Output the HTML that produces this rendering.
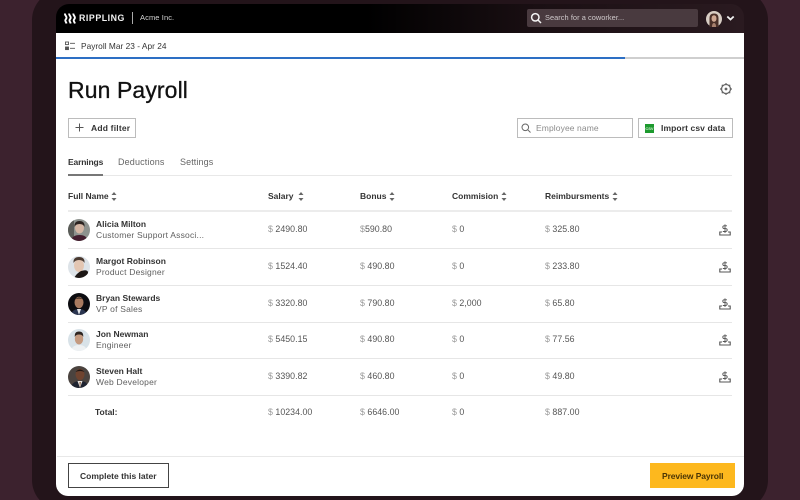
<!DOCTYPE html>
<html><head><meta charset="utf-8">
<style>
*{box-sizing:border-box;margin:0;padding:0}
html,body{width:800px;height:500px;overflow:hidden;background:#3c222e;font-family:"Liberation Sans",sans-serif;color:#2b2b2b}
#wrap{position:relative;width:800px;height:500px;overflow:hidden;background:#3c222e}
.a{position:absolute;white-space:nowrap;line-height:12px}
#frame{position:absolute;left:32px;top:-10px;width:736px;height:520px;background:#23141a;border-radius:30px}
#head{position:absolute;left:56px;top:4px;width:688px;height:40px;border-radius:13px 13px 0 0;background:linear-gradient(90deg,#000 0,#000 45%,#1a0f13 70%,#2a1a20 100%)}
#screen{position:absolute;left:56px;top:33px;width:688px;height:463px;background:#fff;border-radius:0 0 12px 12px}
.line{position:absolute;left:68px;width:664px;height:1px;background:#e6e6e6}
.h{font-size:8.5px;font-weight:bold;color:#333}
.n{font-size:8.5px;font-weight:bold;color:#333}
.s{font-size:8.5px;letter-spacing:.2px;color:#5f5f5f}
.v{font-size:8.8px;letter-spacing:.03px;color:#555}
.v i{font-style:normal;color:#9a9a9a}
.btn{position:absolute;background:#fff;border:1px solid #bcbcbc}
svg{position:absolute;display:block}
</style></head><body><div id="wrap">
<div id="frame"></div>
<div id="head"></div>
<div id="screen"></div>

<svg style="left:64px;top:13px" width="13" height="11" viewBox="0 0 13 11" fill="none" stroke="#fff" stroke-width="1.900"><path d="M.9 .5c0 2.200 1.600 2.400 1.600 4.200 0 1.300-1.200 1.500-1.200 2.800 0 1 .9 1.600 1.200 3M5.100 .5c0 2.200 1.600 2.400 1.600 4.200 0 1.300-1.200 1.500-1.200 2.800 0 1 .9 1.600 1.200 3M9.300 .5c0 2.200 1.600 2.400 1.600 4.200 0 1.300-1.200 1.500-1.200 2.800 0 1 .9 1.600 1.200 3"/></svg>
<div class="a" style="left:79px;top:12px;font-size:8.800px;font-weight:bold;color:#f2f2f2;letter-spacing:.55px">RIPPLING</div>
<div class="a" style="left:132px;top:12px;width:1px;height:12px;background:#aaa"></div>
<div class="a" style="left:140px;top:12px;font-size:7.500px;color:#d5d5d5;letter-spacing:.1px">Acme Inc.</div>

<div class="a" style="left:527px;top:9px;width:171px;height:18px;border-radius:2px;background:#493a3f"></div>
<svg style="left:530px;top:12px" width="12" height="12" viewBox="0 0 12 12" fill="none" stroke="#f4f4f4" stroke-width="1.500"><circle cx="5.300" cy="5.300" r="3.700"/><path d="M8 8l3 3"/></svg>
<div class="a" style="left:545px;top:12px;font-size:7.400px;color:#cfc9cb;letter-spacing:.05px">Search for a coworker...</div>
<svg style="left:706px;top:11px" width="16" height="16" viewBox="0 0 16 16"><circle cx="8" cy="8" r="8" fill="#d8cdc4"/><path d="M3.500 16V7q0-4.500 4.500-4.500T12.500 7v9z" fill="#4a2f28"/><ellipse cx="8" cy="7.500" rx="2.500" ry="3.300" fill="#cfa893"/><path d="M6 16q0-4 2-4t2 4z" fill="#a8806e"/></svg>
<svg style="left:726px;top:15px" width="9" height="7" viewBox="0 0 9 7" fill="none" stroke="#f2f2f2" stroke-width="1.800"><path d="M1.300 1.500l3.200 3 3.200-3"/></svg>

<svg style="left:65px;top:41px" width="10" height="10" viewBox="0 0 10 10" fill="none" stroke="#555" stroke-width=".9"><rect x=".5" y="1" width="3" height="2.600"/><rect x=".5" y="6" width="3" height="2.600" fill="#555"/><path d="M5 2.300h5M5 7.300h5"/></svg>
<div class="a" style="left:81px;top:40px;font-size:8.300px;color:#333;letter-spacing:.03px">Payroll Mar 23 - Apr 24</div>
<div class="a" style="left:56px;top:57px;width:688px;height:2px;background:#cfcfcf"></div>
<div class="a" style="left:56px;top:57px;width:569px;height:2px;background:#2d6fc4"></div>

<div class="a" style="left:68px;top:76px;font-size:23px;line-height:29px;color:#111;letter-spacing:.1px;-webkit-text-stroke:.3px #111">Run Payroll</div>
<svg style="left:719px;top:82px" width="14" height="14" viewBox="0 0 14 14" fill="none" stroke="#666"><circle cx="7" cy="7" r="4.500" stroke-width="1.300"/><circle cx="7" cy="7" r="1.400" fill="#666" stroke="none"/><path d="M7 1v1.500M7 11.500V13M1 7h1.500M11.500 7H13M2.800 2.800l1 1M10.200 10.200l1 1M2.800 11.200l1-1M10.200 3.800l1-1" stroke-width="1.200"/></svg>

<div class="btn" style="left:68px;top:118px;width:68px;height:20px"></div>
<svg style="left:75px;top:123px" width="9" height="9" viewBox="0 0 9 9" stroke="#555" stroke-width="1"><path d="M4.500 .5v8M.5 4.500h8"/></svg>
<div class="a" style="left:91px;top:122px;font-size:8.500px;font-weight:bold;letter-spacing:.2px;color:#333">Add filter</div>

<div class="btn" style="left:517px;top:118px;width:116px;height:20px"></div>
<svg style="left:521px;top:123px" width="10" height="10" viewBox="0 0 10 10" fill="none" stroke="#666" stroke-width="1"><circle cx="4.300" cy="4.300" r="3.300"/><path d="M6.800 6.800l2.700 2.700"/></svg>
<div class="a" style="left:536px;top:122px;font-size:8.500px;color:#8c8c8c;letter-spacing:.1px">Employee name</div>
<div class="btn" style="left:638px;top:118px;width:95px;height:20px"></div>
<div class="a" style="left:645px;top:124px;width:9px;height:9px;background:#1d9a2e;color:#d8f0d8;font-size:4px;font-weight:bold;line-height:9px;text-align:center">CSV</div>
<div class="a" style="left:661px;top:122px;font-size:8.500px;font-weight:bold;letter-spacing:.1px;color:#333">Import csv data</div>

<div class="a" style="left:68px;top:156px;font-size:8.500px;font-weight:bold;letter-spacing:-.15px;color:#333">Earnings</div>
<div class="a" style="left:118px;top:156px;font-size:9px;letter-spacing:.15px;color:#666">Deductions</div>
<div class="a" style="left:180px;top:156px;font-size:9px;letter-spacing:.1px;color:#666">Settings</div>
<div class="line" style="top:175px;background:#e8e8e8"></div>
<div class="a" style="left:68px;top:174px;width:35px;height:2px;background:#777"></div>

<div class="a h" style="left:68px;top:190px">Full Name</div>
<div class="a h" style="left:268px;top:190px">Salary</div>
<div class="a h" style="left:360px;top:190px">Bonus</div>
<div class="a h" style="left:452px;top:190px">Commision</div>
<div class="a h" style="left:545px;top:190px">Reimbursments</div>
<svg style="left:111px;top:192px" width="6" height="9" viewBox="0 0 6 9" fill="#666"><path d="M3 0l2.500 3h-5zM3 9L.5 6h5z"/></svg>
<svg style="left:298px;top:192px" width="6" height="9" viewBox="0 0 6 9" fill="#666"><path d="M3 0l2.500 3h-5zM3 9L.5 6h5z"/></svg>
<svg style="left:389px;top:192px" width="6" height="9" viewBox="0 0 6 9" fill="#666"><path d="M3 0l2.500 3h-5zM3 9L.5 6h5z"/></svg>
<svg style="left:501px;top:192px" width="6" height="9" viewBox="0 0 6 9" fill="#666"><path d="M3 0l2.500 3h-5zM3 9L.5 6h5z"/></svg>
<svg style="left:612px;top:192px" width="6" height="9" viewBox="0 0 6 9" fill="#666"><path d="M3 0l2.500 3h-5zM3 9L.5 6h5z"/></svg>

<div class="line" style="top:210px;height:2px;background:#ececec"></div>
<div class="line" style="top:248px"></div>
<div class="line" style="top:285px"></div>
<div class="line" style="top:322px"></div>
<div class="line" style="top:358px"></div>
<div class="line" style="top:395px"></div>

<svg style="left:68px;top:219px" width="22" height="22" viewBox="0 0 22 22"><clipPath id="c1"><circle cx="11" cy="11" r="11"/></clipPath><g clip-path="url(#c1)"><rect width="22" height="22" fill="#8d928e"/><rect width="6" height="22" fill="#5a5c58"/><ellipse cx="11.500" cy="9" rx="4.500" ry="5.500" fill="#d3b5a3"/><path d="M6.500 8q-.5-6 5-6t5 6q-1-3-5-3t-5 3z" fill="#2b2320"/><path d="M3 22q1-6 8.500-6t8 6z" fill="#431d2e"/></g></svg>
<svg style="left:68px;top:256px" width="22" height="22" viewBox="0 0 22 22"><clipPath id="c2"><circle cx="11" cy="11" r="11"/></clipPath><g clip-path="url(#c2)"><rect width="22" height="22" fill="#dde3e8"/><ellipse cx="11" cy="9.500" rx="5" ry="6.500" fill="#e3c6b2"/><path d="M5.500 7q-.5-6 5.500-6t5.500 6q-1.500-3-5.500-3T5.500 7z" fill="#4a3a30"/><path d="M13 15q6-2 7 1 0 6-7 6H6q3-5 7-7z" fill="#1c1715"/></g></svg>
<svg style="left:68px;top:293px" width="22" height="22" viewBox="0 0 22 22"><clipPath id="c3"><circle cx="11" cy="11" r="11"/></clipPath><g clip-path="url(#c3)"><rect width="22" height="22" fill="#0c0c10"/><ellipse cx="11" cy="9.500" rx="4.500" ry="5.700" fill="#a87a5f"/><path d="M6.500 7q4.500-5 9 0l-1-1q-3.500-1-7 0z" fill="#1c1512"/><path d="M3 22q1-6 8-6t8 6z" fill="#2a3550"/><path d="M9 16l2 6 2-6z" fill="#e5e7ea"/></g></svg>
<svg style="left:68px;top:329px" width="22" height="22" viewBox="0 0 22 22"><clipPath id="c4"><circle cx="11" cy="11" r="11"/></clipPath><g clip-path="url(#c4)"><rect width="22" height="22" fill="#d8e2e8"/><ellipse cx="11" cy="10" rx="4.200" ry="5.500" fill="#c49a80"/><path d="M6.800 8q-.5-5.500 4.200-5.500T15.200 8q-1-2.500-4.200-2.500T6.800 8z" fill="#2d2420"/><path d="M3 22q1-6 8-6t8 6z" fill="#eef1f3"/></g></svg>
<svg style="left:68px;top:366px" width="22" height="22" viewBox="0 0 22 22"><clipPath id="c5"><circle cx="11" cy="11" r="11"/></clipPath><g clip-path="url(#c5)"><rect width="22" height="22" fill="#4a433f"/><ellipse cx="12" cy="8.500" rx="4.500" ry="5.700" fill="#6e432f"/><path d="M7.500 6q4.500-5 9 0q-4.500-2-9 0z" fill="#1f1714"/><path d="M3 22q1-7 9-7t8 7z" fill="#1e2330"/><path d="M9.500 15l2.500 7 2.500-7z" fill="#e8e4df"/><path d="M11.500 16l.5 6 .8-6z" fill="#7a4a2c"/></g></svg>

<div class="a n" style="left:96px;top:218px">Alicia Milton</div><div class="a s" style="left:96px;top:229px">Customer Support Associ...</div>
<div class="a n" style="left:96px;top:255px">Margot Robinson</div><div class="a s" style="left:96px;top:266px">Product Designer</div>
<div class="a n" style="left:96px;top:292px">Bryan Stewards</div><div class="a s" style="left:96px;top:303px">VP of Sales</div>
<div class="a n" style="left:96px;top:328px">Jon Newman</div><div class="a s" style="left:96px;top:339px">Engineer</div>
<div class="a n" style="left:96px;top:365px">Steven Halt</div><div class="a s" style="left:96px;top:376px">Web Developer</div>

<div class="a v" style="left:268px;top:223px"><i>$</i> 2490.80</div><div class="a v" style="left:360px;top:223px"><i>$</i>590.80</div><div class="a v" style="left:452px;top:223px"><i>$</i> 0</div><div class="a v" style="left:545px;top:223px"><i>$</i> 325.80</div>
<div class="a v" style="left:268px;top:260px"><i>$</i> 1524.40</div><div class="a v" style="left:360px;top:260px"><i>$</i> 490.80</div><div class="a v" style="left:452px;top:260px"><i>$</i> 0</div><div class="a v" style="left:545px;top:260px"><i>$</i> 233.80</div>
<div class="a v" style="left:268px;top:297px"><i>$</i> 3320.80</div><div class="a v" style="left:360px;top:297px"><i>$</i> 790.80</div><div class="a v" style="left:452px;top:297px"><i>$</i> 2,000</div><div class="a v" style="left:545px;top:297px"><i>$</i> 65.80</div>
<div class="a v" style="left:268px;top:333px"><i>$</i> 5450.15</div><div class="a v" style="left:360px;top:333px"><i>$</i> 490.80</div><div class="a v" style="left:452px;top:333px"><i>$</i> 0</div><div class="a v" style="left:545px;top:333px"><i>$</i> 77.56</div>
<div class="a v" style="left:268px;top:370px"><i>$</i> 3390.82</div><div class="a v" style="left:360px;top:370px"><i>$</i> 460.80</div><div class="a v" style="left:452px;top:370px"><i>$</i> 0</div><div class="a v" style="left:545px;top:370px"><i>$</i> 49.80</div>
<div class="a n" style="left:95px;top:406px">Total:</div>
<div class="a v" style="left:268px;top:406px"><i>$</i> 10234.00</div><div class="a v" style="left:360px;top:406px"><i>$</i> 6646.00</div><div class="a v" style="left:452px;top:406px"><i>$</i> 0</div><div class="a v" style="left:545px;top:406px"><i>$</i> 887.00</div>

<svg style="left:719px;top:224px" width="12" height="12" viewBox="0 0 12 12" fill="none" stroke="#555" stroke-width="1.100"><path d="M3 8H.8v3h10.400V8H9"/><path d="M8 1.800H5Q3.800 1.800 3.800 3.200T5.500 4.600h1Q8.200 4.600 8.200 6T6.500 7.500H3.800M6 .4v8.600" stroke-width=".9"/></svg>
<svg style="left:719px;top:261px" width="12" height="12" viewBox="0 0 12 12" fill="none" stroke="#555" stroke-width="1.100"><path d="M3 8H.8v3h10.400V8H9"/><path d="M8 1.800H5Q3.800 1.800 3.800 3.200T5.500 4.600h1Q8.200 4.600 8.200 6T6.500 7.500H3.800M6 .4v8.600" stroke-width=".9"/></svg>
<svg style="left:719px;top:298px" width="12" height="12" viewBox="0 0 12 12" fill="none" stroke="#555" stroke-width="1.100"><path d="M3 8H.8v3h10.400V8H9"/><path d="M8 1.800H5Q3.800 1.800 3.800 3.200T5.500 4.600h1Q8.200 4.600 8.200 6T6.500 7.500H3.800M6 .4v8.600" stroke-width=".9"/></svg>
<svg style="left:719px;top:334px" width="12" height="12" viewBox="0 0 12 12" fill="none" stroke="#555" stroke-width="1.100"><path d="M3 8H.8v3h10.400V8H9"/><path d="M8 1.800H5Q3.800 1.800 3.800 3.200T5.500 4.600h1Q8.200 4.600 8.200 6T6.500 7.500H3.800M6 .4v8.600" stroke-width=".9"/></svg>
<svg style="left:719px;top:371px" width="12" height="12" viewBox="0 0 12 12" fill="none" stroke="#555" stroke-width="1.100"><path d="M3 8H.8v3h10.400V8H9"/><path d="M8 1.800H5Q3.800 1.800 3.800 3.200T5.500 4.600h1Q8.200 4.600 8.200 6T6.500 7.500H3.800M6 .4v8.600" stroke-width=".9"/></svg>

<div class="a" style="left:57px;top:456px;width:687px;height:1px;background:#e8e8e8"></div>
<div class="btn" style="left:68px;top:463px;width:101px;height:25px;border-color:#444"></div>
<div class="a" style="left:80px;top:470px;font-size:8.500px;font-weight:bold;color:#333">Complete this later</div>
<div class="a" style="left:650px;top:463px;width:85px;height:25px;background:#fdb81e"></div>
<div class="a" style="left:662px;top:470px;font-size:8.500px;font-weight:bold;letter-spacing:-.1px;color:#4a3505">Preview Payroll</div>
</div></body></html>
